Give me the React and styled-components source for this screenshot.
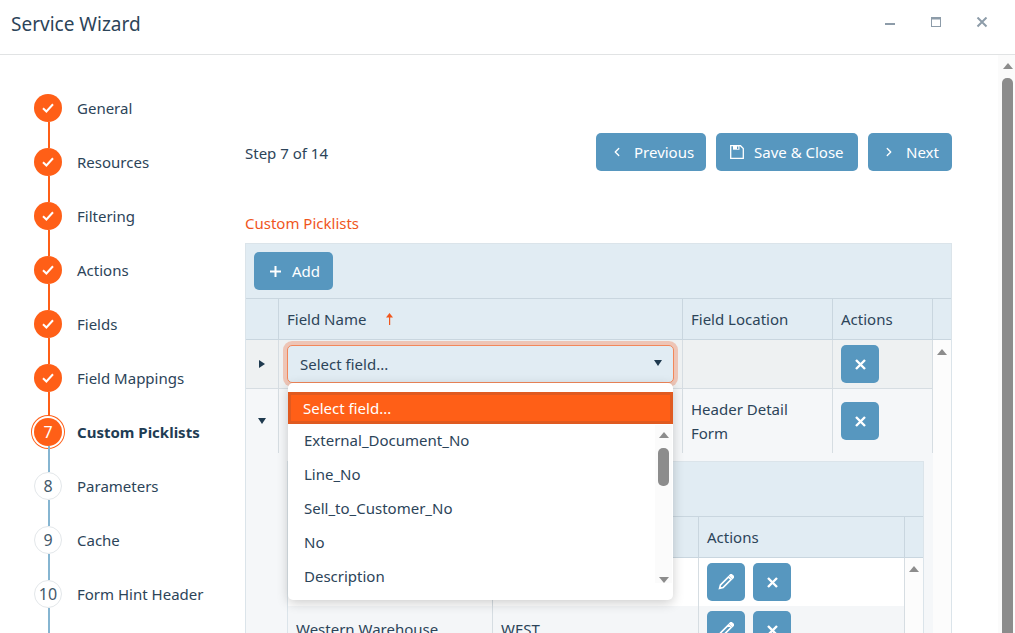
import styled, { createGlobalStyle } from "styled-components";
import { ChevronLeft, ChevronRight } from "lucide-react";

const GlobalStyle = createGlobalStyle`
  html, body {
    margin: 0;
    height: 100%;
    background: #fff;
    overflow: hidden;
  }
  body {
    font-family: "Noto Sans", "Open Sans", sans-serif;
    font-size: 15px;
    color: #2c4459;
  }
  * {
    box-sizing: border-box;
  }
`;

const Page = styled.div`
  display: flex;
  flex-direction: column;
  height: 633px;
  overflow: hidden;
`;

const Header = styled.header`
  flex: none;
  display: flex;
  align-items: center;
  justify-content: space-between;
  height: 55px;
  padding: 0 26px 6px 11px;
  border-bottom: 1px solid #e1e3e4;
`;

const Title = styled.h1`
  margin: 0;
  font-size: 19px;
  font-weight: 400;
  color: #2c4459;
`;

const WindowControls = styled.div`
  display: flex;
  gap: 32px;
`;

const WindowButton = styled.button`
  display: flex;
  width: 14px;
  height: 14px;
  padding: 0;
  border: 0;
  background: none;
`;

const Body = styled.div`
  flex: 1;
  display: flex;
  min-height: 0;
`;

const Sidebar = styled.nav`
  flex: none;
  width: 245px;
  padding: 39px 0 0 34px;
`;

const Step = styled.div`
  display: flex;
  gap: 15px;
  height: 54px;
`;

const Marker = styled.div`
  display: flex;
  flex-direction: column;
  align-items: center;
  width: 28px;
`;

const Circle = styled.div`
  flex: none;
  display: flex;
  align-items: center;
  justify-content: center;
  width: 28px;
  height: 28px;
  border-radius: 50%;
  font-size: 16px;
  color: ${(p) => (p.$state === "todo" ? "#44596b" : "#fff")};
  background: ${(p) => (p.$state === "todo" ? "#fff" : "#ff5f17")};
  border: ${(p) => (p.$state === "todo" ? "1px solid #e3e7ea" : "0")};
  box-shadow: ${(p) =>
    p.$state === "active" ? "0 0 0 2px #fff, 0 0 0 3px #ff5f17" : "none"};
`;

const Connector = styled.div`
  flex: 1;
  width: 2px;
  margin-left: 2px;
  background: ${(p) => (p.$done ? "#ff5f17" : "#86b5d1")};
`;

const StepLabel = styled.div`
  height: 28px;
  line-height: 28px;
  font-weight: ${(p) => (p.$active ? 700 : 400)};
  color: ${(p) => (p.$active ? "#1f3d54" : "#2c4459")};
  white-space: nowrap;
`;

const Content = styled.main`
  flex: none;
  width: 707px;
  padding-top: 78px;
`;

const StepBar = styled.div`
  display: flex;
  align-items: center;
  gap: 10px;
`;

const StepCount = styled.div`
  margin-right: auto;
  padding-top: 2px;
`;

const Button = styled.button`
  flex: none;
  display: flex;
  align-items: center;
  justify-content: ${(p) => (p.$square ? "center" : "flex-start")};
  gap: ${(p) => (p.$square ? 0 : "10px")};
  width: ${(p) => p.$width}px;
  height: 38px;
  padding: ${(p) => (p.$square ? 0 : "0 0 0 14px")};
  border: 0;
  border-radius: 5px;
  background: #5797bf;
  color: #fff;
  font: inherit;
  white-space: nowrap;
`;

const IconBox = styled.span`
  flex: none;
  display: flex;
  align-items: center;
  justify-content: center;
  width: 14px;
  height: 16px;
`;

const SectionTitle = styled.div`
  height: 20px;
  margin: 42px 0 10px;
  line-height: 20px;
  color: #f0561d;
`;

const Grid = styled.section`
  border: 1px solid #dbe4ea;
  border-bottom: 0;
`;

const Toolbar = styled.div`
  height: 54px;
  padding: 8px;
  background: #e1ecf3;
`;

const HeadRow = styled.div`
  display: grid;
  grid-template-columns: ${(p) => p.$columns};
  height: 42px;
  background: #e1ecf3;
  border-top: 1px solid #c9d6df;
  border-bottom: 1px solid #c9d6df;
`;

const HeadCell = styled.div`
  display: flex;
  align-items: center;
  gap: 20px;
  padding: 0 8px;
  border-right: 1px solid #c9d6df;
  &:last-child {
    border-right: 0;
  }
`;

const GridBody = styled.div`
  display: flex;
  height: ${(p) => p.$height}px;
`;

const Rows = styled.div`
  flex: none;
  width: ${(p) => p.$width}px;
`;

const Row = styled.div`
  display: grid;
  grid-template-columns: ${(p) => p.$columns};
  height: ${(p) => p.$height}px;
  background: ${(p) => p.$bg};
  border-bottom: ${(p) => (p.$line ? "1px solid #d6dde2" : "0")};
`;

const Cell = styled.div`
  position: relative;
  display: flex;
  align-items: ${(p) => (p.$center ? "center" : "flex-start")};
  justify-content: ${(p) => (p.$center ? "center" : "flex-start")};
  gap: 8px;
  padding: ${(p) => (p.$center ? "0" : `${p.$top ?? 5}px 8px 0`)};
  line-height: 24px;
  border-right: 1px solid #d6dde2;
`;

const Triangle = styled.span`
  display: block;
  width: 0;
  height: 0;
  border-style: solid;
  border-color: transparent;
  border-width: ${(p) => (p.$side ? "4px 0 4px 6px" : "6px 4px 0")};
  border-left-color: ${(p) => (p.$side ? "#1f3a4f" : "transparent")};
  border-top-color: ${(p) => (p.$side ? "transparent" : "#1f3a4f")};
`;

const SelectCaret = styled(Triangle)`
  margin-bottom: 3px;
`;

const Select = styled.div`
  display: flex;
  flex: 1;
  align-items: center;
  justify-content: space-between;
  height: 38px;
  padding: 0 11px 0 12px;
  border: 1px solid #f2875a;
  border-radius: 5px;
  background: #e1ecf3;
  box-shadow: 0 0 0 4px rgba(240, 110, 60, 0.33);
`;

const Dropdown = styled.div`
  position: absolute;
  top: 43px;
  left: 9px;
  z-index: 5;
  width: 385px;
  height: 217px;
  padding: 9px 0 6px;
  border-radius: 5px;
  background: #fff;
  box-shadow: 0 3px 12px rgba(0, 0, 0, 0.2);
`;

const Option = styled.div`
  display: flex;
  align-items: center;
  height: ${(p) => (p.$selected ? 32 : 34)}px;
  padding: ${(p) => (p.$selected ? "0 0 0 12px" : "0 0 2px 16px")};
  background: ${(p) => (p.$selected ? "#ff5f17" : "transparent")};
  border: ${(p) => (p.$selected ? "3px solid #e05a20" : "0")};
  color: ${(p) => (p.$selected ? "#fff" : "#2c4459")};
`;

const OptionScroll = styled.div`
  position: absolute;
  top: 42px;
  right: 1px;
  display: flex;
  flex-direction: column;
  align-items: center;
  width: 17px;
  height: 158px;
  padding-top: 7px;
  background: #fbfbfb;
`;

const Track = styled.div`
  flex: none;
  display: flex;
  flex-direction: column;
  align-items: center;
  width: ${(p) => p.$width}px;
  padding-top: ${(p) => p.$top}px;
  background: #fcfcfc;
`;

const ScrollArrow = styled.span`
  display: block;
  width: 0;
  height: 0;
  border-style: solid;
  border-color: transparent;
  border-width: ${(p) => (p.$down ? "6px 5px 0" : "0 5px 6px")};
  border-bottom-color: ${(p) => (p.$down ? "transparent" : "#8c8c8c")};
  border-top-color: ${(p) => (p.$down ? "#8c8c8c" : "transparent")};
`;

const Thumb = styled.div`
  width: 11px;
  height: ${(p) => p.$height}px;
  margin-top: ${(p) => p.$gap}px;
  border-radius: 5px;
  background: #8c8c8c;
`;

const OptionSpacer = styled.div`
  flex: 1;
`;

const Detail = styled.div`
  height: 300px;
  padding: 8px 9px 0 41px;
  background: #f5f7f9;
`;

const NestedGrid = styled.div`
  border: 1px solid #dbe4ea;
  border-bottom: 0;
`;

const PageScroll = styled.div`
  flex: none;
  display: flex;
  flex-direction: column;
  align-items: center;
  width: 17px;
  margin-left: auto;
  padding: 8px 2px 0 4px;
  background: #fbfbfb;
`;

const PageThumb = styled.div`
  flex: 1;
  width: 11px;
  margin-top: 9px;
  border-radius: 5px 5px 0 0;
  background: #8c8c8c;
`;

const SortArrow = () => (
  <svg width="7" height="12" viewBox="0 0 7 12" fill="#f0561d">
    <path d="M3.5 0 7 4.500H0z" />
    <rect x="3" y="4" width="1.200" height="8" />
  </svg>
);

const CheckIcon = () => (
  <svg width="12" height="10" viewBox="0 0 12 10" fill="none" stroke="#fff" strokeWidth="2">
    <path d="M1 5.200 4.400 8.500 11 1.300" />
  </svg>
);

const CrossIcon = () => (
  <svg width="11" height="11" viewBox="0 0 11 11" stroke="#fff" strokeWidth="2.4">
    <path d="M1 1l9 9M10 1l-9 9" />
  </svg>
);

const PlusIcon = () => (
  <svg width="11" height="11" viewBox="0 0 11 11" stroke="#fff" strokeWidth="2">
    <path d="M5.500 0v11M0 5.500h11" />
  </svg>
);

const SaveIcon = () => (
  <svg width="14" height="14" viewBox="0 0 14 14" fill="none" stroke="#fff" strokeWidth="1.300">
    <path d="M.7.7h9.800l2.800 2.800v9.800H.7z" />
    <path d="M3 .7h6.500v4H3z" fill="#fff" stroke="none" />
    <path d="M7 1.500h1.300v2.400H7z" fill="#5797bf" stroke="none" />
  </svg>
);

const PencilIcon = () => (
  <svg width="16" height="16" viewBox="0 0 16 16" fill="none" stroke="#fff" strokeWidth="1.700">
    <path d="M1.600 14.400l.9-3.500L10.500 2.900l2.600 2.600-8 8z" />
    <path d="M11.800 1.600l.6-.6a1 1 0 0 1 1.400 0l1.200 1.200a1 1 0 0 1 0 1.400l-.6.600z" fill="#fff" />
  </svg>
);

const steps = [
  { n: 1, label: "General", state: "done" },
  { n: 2, label: "Resources", state: "done" },
  { n: 3, label: "Filtering", state: "done" },
  { n: 4, label: "Actions", state: "done" },
  { n: 5, label: "Fields", state: "done" },
  { n: 6, label: "Field Mappings", state: "done" },
  { n: 7, label: "Custom Picklists", state: "active" },
  { n: 8, label: "Parameters", state: "todo" },
  { n: 9, label: "Cache", state: "todo" },
  { n: 10, label: "Form Hint Header", state: "todo" },
];

const options = [
  "External_Document_No",
  "Line_No",
  "Sell_to_Customer_No",
  "No",
  "Description",
];

const mainColumns = "33px 404px 150px 100px 18px";
const mainRowColumns = "33px 404px 150px 100px";
const nestedColumns = "205px 206px 206px 18px";
const nestedRowColumns = "205px 206px 206px";

function App() {
  return (
    <Page>
      <GlobalStyle />
      <Header>
        <Title>Service Wizard</Title>
        <WindowControls>
          <WindowButton>
            <svg width="14" height="14" viewBox="0 0 14 14" fill="#8d9ca9">
              <rect x="2" y="6" width="10" height="2" />
            </svg>
          </WindowButton>
          <WindowButton>
            <svg width="14" height="14" viewBox="0 0 14 14" fill="none" stroke="#8d9ca9">
              <rect x="2.500" y="0.500" width="9" height="9" />
              <rect x="2" y="0" width="10" height="2.500" fill="#8d9ca9" stroke="none" />
            </svg>
          </WindowButton>
          <WindowButton>
            <svg width="14" height="14" viewBox="0 0 14 14" stroke="#8d9ca9" strokeWidth="2">
              <path d="M2.500.5l9 9M11.500.5l-9 9" />
            </svg>
          </WindowButton>
        </WindowControls>
      </Header>

      <Body>
        <Sidebar>
          {steps.map((step) => (
            <Step key={step.n}>
              <Marker>
                <Circle $state={step.state}>
                  {step.state === "done" ? <CheckIcon /> : step.n}
                </Circle>
                <Connector $done={step.state === "done"} />
              </Marker>
              <StepLabel $active={step.state === "active"}>{step.label}</StepLabel>
            </Step>
          ))}
        </Sidebar>

        <Content>
          <StepBar>
            <StepCount>Step 7 of 14</StepCount>
            <Button $width={110}>
              <IconBox>
                <ChevronLeft size={18} strokeWidth={2.3} />
              </IconBox>
              Previous
            </Button>
            <Button $width={142}>
              <IconBox>
                <SaveIcon />
              </IconBox>
              Save &amp; Close
            </Button>
            <Button $width={84}>
              <IconBox>
                <ChevronRight size={18} strokeWidth={2.3} />
              </IconBox>
              Next
            </Button>
          </StepBar>

          <SectionTitle>Custom Picklists</SectionTitle>

          <Grid>
            <Toolbar>
              <Button $width={79}>
                <IconBox>
                  <PlusIcon />
                </IconBox>
                Add
              </Button>
            </Toolbar>
            <HeadRow $columns={mainColumns}>
              <HeadCell />
              <HeadCell>
                Field Name
                <SortArrow />
              </HeadCell>
              <HeadCell>Field Location</HeadCell>
              <HeadCell>Actions</HeadCell>
              <HeadCell />
            </HeadRow>
            <GridBody $height={400}>
              <Rows $width={687}>
                <Row $columns={mainRowColumns} $height={49} $bg="#eef1f2" $line>
                  <Cell $center>
                    <Triangle $side />
                  </Cell>
                  <Cell>
                    <Select>
                      Select field...
                      <SelectCaret />
                    </Select>
                    <Dropdown>
                      <Option $selected>Select field...</Option>
                      {options.map((option) => (
                        <Option key={option}>{option}</Option>
                      ))}
                      <OptionScroll>
                        <ScrollArrow />
                        <Thumb $height={38} $gap={10} />
                        <OptionSpacer />
                        <ScrollArrow $down />
                      </OptionScroll>
                    </Dropdown>
                  </Cell>
                  <Cell />
                  <Cell>
                    <Button $width={38} $square>
                      <CrossIcon />
                    </Button>
                  </Cell>
                </Row>
                <Row $columns={mainRowColumns} $height={64} $bg="#f5f7f9">
                  <Cell $center>
                    <Triangle />
                  </Cell>
                  <Cell />
                  <Cell $top={8}>
                    <span>
                      Header Detail
                      <br />
                      Form
                    </span>
                  </Cell>
                  <Cell $top={13}>
                    <Button $width={38} $square>
                      <CrossIcon />
                    </Button>
                  </Cell>
                </Row>
                <Detail>
                  <NestedGrid>
                    <Toolbar />
                    <HeadRow $columns={nestedColumns}>
                      <HeadCell />
                      <HeadCell />
                      <HeadCell>Actions</HeadCell>
                      <HeadCell />
                    </HeadRow>
                    <GridBody $height={96}>
                      <Rows $width={617}>
                        <Row $columns={nestedRowColumns} $height={48} $bg="#fff">
                          <Cell />
                          <Cell />
                          <Cell>
                            <Button $width={38} $square>
                              <PencilIcon />
                            </Button>
                            <Button $width={38} $square>
                              <CrossIcon />
                            </Button>
                          </Cell>
                        </Row>
                        <Row $columns={nestedRowColumns} $height={48} $bg="#f4f6f8">
                          <Cell $top={11}>Western Warehouse</Cell>
                          <Cell $top={11}>WEST</Cell>
                          <Cell>
                            <Button $width={38} $square>
                              <PencilIcon />
                            </Button>
                            <Button $width={38} $square>
                              <CrossIcon />
                            </Button>
                          </Cell>
                        </Row>
                      </Rows>
                      <Track $width={18} $top={8}>
                        <ScrollArrow />
                      </Track>
                    </GridBody>
                  </NestedGrid>
                </Detail>
              </Rows>
              <Track $width={18} $top={9}>
                <ScrollArrow />
              </Track>
            </GridBody>
          </Grid>
        </Content>

        <PageScroll>
          <ScrollArrow />
          <PageThumb />
        </PageScroll>
      </Body>
    </Page>
  );
}

export default App;
